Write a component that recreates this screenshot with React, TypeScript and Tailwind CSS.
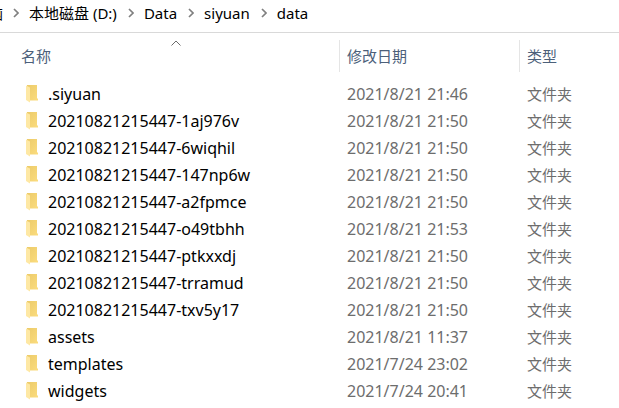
import type { ReactNode } from "react";

type Folder = {
  name: string;
  modified: string;
};

const crumbs = ["本地磁盘 (D:)", "Data", "siyuan", "data"];

const folders: Folder[] = [
  { name: ".siyuan", modified: "2021/8/21 21:46" },
  { name: "20210821215447-1aj976v", modified: "2021/8/21 21:50" },
  { name: "20210821215447-6wiqhil", modified: "2021/8/21 21:50" },
  { name: "20210821215447-147np6w", modified: "2021/8/21 21:50" },
  { name: "20210821215447-a2fpmce", modified: "2021/8/21 21:50" },
  { name: "20210821215447-o49tbhh", modified: "2021/8/21 21:53" },
  { name: "20210821215447-ptkxxdj", modified: "2021/8/21 21:50" },
  { name: "20210821215447-trramud", modified: "2021/8/21 21:50" },
  { name: "20210821215447-txv5y17", modified: "2021/8/21 21:50" },
  { name: "assets", modified: "2021/8/21 11:37" },
  { name: "templates", modified: "2021/7/24 23:02" },
  { name: "widgets", modified: "2021/7/24 20:41" },
];

function CrumbArrow() {
  return (
    <svg className="shrink-0" width="6" height="11" viewBox="0 0 6 11" fill="none" aria-hidden="true">
      <path d="M1 1L5 5L1 9" stroke="#808080" strokeWidth="1.7" />
    </svg>
  );
}

function FolderIcon() {
  return (
    <svg className="shrink-0" width="12" height="19" viewBox="0 0 12 19" aria-hidden="true">
      <defs>
        <linearGradient id="back" x1="0" y1="0" x2="1" y2="1">
          <stop offset="0" stopColor="#eccb6a" />
          <stop offset="1" stopColor="#fbdc7e" />
        </linearGradient>
      </defs>
      <path d="M1 0H11V13.5H12V15.5H3L1 14Z" fill="url(#back)" />
      <path d="M0 0.5L4 2.5V17.5L0 15Z" fill="#fee8a4" />
    </svg>
  );
}

function HeaderCell({ children }: { children: ReactNode }) {
  return (
    <th scope="col" className="p-0 text-left font-normal">
      <div className="flex h-8 items-center border-l border-[#e5e5e5] pl-[7px]">{children}</div>
    </th>
  );
}

export default function App() {
  return (
    <main className="w-full overflow-hidden bg-white font-['Noto_Sans','Noto_Sans_CJK_SC',sans-serif] text-[15px] leading-[27px] text-black">
      <nav aria-label="路径" className="flex h-[33px] items-start overflow-hidden border-b border-[#d9d9d9] whitespace-nowrap">
        <a href="#pc" className="flex w-[3px] shrink-0 justify-end overflow-hidden">
          此电脑
        </a>
        <ol className="flex">
          {crumbs.map((crumb) => (
            <li key={crumb} className="flex items-center gap-[10px] pl-[10px]">
              <CrumbArrow />
              <a href="#folder" className="pr-px">{crumb}</a>
            </li>
          ))}
        </ol>
      </nav>

      <div className="pt-[7px] pl-[13px]">
        <table className="w-full table-fixed border-collapse">
          <colgroup>
            <col className="w-[326px]" />
            <col className="w-[180px]" />
            <col />
          </colgroup>
          <thead className="text-[#4c607a]">
            <tr>
              <th scope="col" aria-sort="ascending" className="relative p-0 text-left font-normal">
                <div className="flex h-8 items-center pl-2">名称</div>
                <svg className="absolute top-0 left-1/2 -translate-x-1/2" width="11" height="6" viewBox="0 0 11 6" fill="none" aria-hidden="true">
                  <path d="M1 5.5L5.5 1L10 5.5" stroke="#6b6b6b" />
                </svg>
              </th>
              <HeaderCell>修改日期</HeaderCell>
              <HeaderCell>类型</HeaderCell>
            </tr>
          </thead>
          <tbody className="text-[#6d6d6d]">
            <tr aria-hidden="true">
              <td colSpan={3} className="h-[9px] p-0"></td>
            </tr>
            {folders.map((folder) => (
              <tr key={folder.name}>
                <td className="p-0 pl-[13px] text-base leading-[27px] text-black">
                  <div className="flex h-[27px] items-center gap-[10px]">
                    <FolderIcon />
                    {folder.name}
                  </div>
                </td>
                <td className="p-0 pl-2 text-base leading-[27px]">{folder.modified}</td>
                <td className="p-0 pl-2">文件夹</td>
              </tr>
            ))}
          </tbody>
        </table>
      </div>
    </main>
  );
}
